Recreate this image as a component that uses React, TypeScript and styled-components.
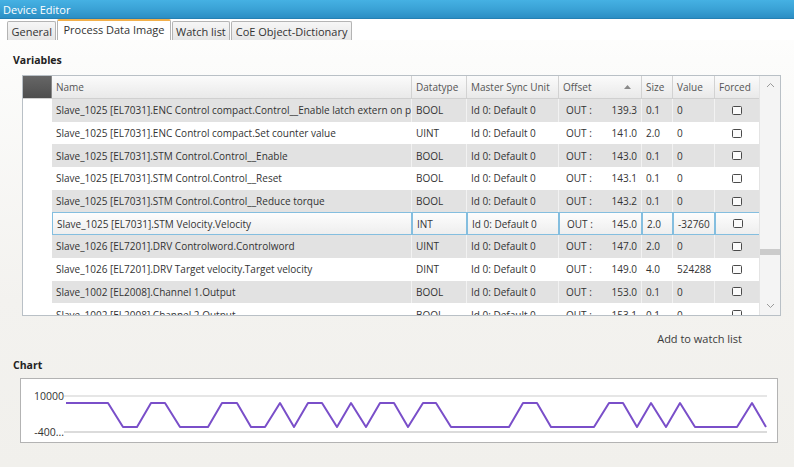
import React from "react";
import styled, { createGlobalStyle, css } from "styled-components";

const GlobalStyle = createGlobalStyle`
  html, body { margin: 0; padding: 0; }
  body { font-family: "Open Sans", "Noto Sans", sans-serif; color: #333; }
`;

const Window = styled.div`
  width: 794px;
  height: 467px;
  display: flex;
  flex-direction: column;
  overflow: hidden;
  background: linear-gradient(to bottom, #ffffff 0px, #fcfcfb 60px, #f3f2ef 300px, #f1f0ec 100%);
`;

const TitleBar = styled.div`
  height: 19px;
  flex: none;
  display: flex;
  align-items: center;
  padding-left: 3px;
  background: linear-gradient(to bottom, #45b1e3 0%, #3aa2d6 50%, #2b8ec4 100%);
  border-bottom: 1px solid #2580b3;
  box-sizing: border-box;
  color: #fff;
  font-size: 11px;
`;

const TabStrip = styled.div`
  height: 21px;
  flex: none;
  display: flex;
  align-items: flex-end;
  padding-left: 7px;
  background: #fff;
`;

const Tab = styled.div<{ $active?: boolean }>`
  box-sizing: border-box;
  height: 19px;
  padding: 0 3.5px;
  display: flex;
  align-items: center;
  font-size: 11px;
  color: #333;
  border: 1px solid #b4b4b4;
  border-bottom: none;
  border-radius: 2px 2px 0 0;
  margin-right: 1px;
  background: linear-gradient(to bottom, #f6f6f6, #e6e6e6);
  ${(p) =>
    p.$active &&
    css`
      height: 21px;
      padding: 0 5px 2px;
      background: #fff;
      border-top: 2px solid #f2b04c;
      border-color: #f2b04c #b4b4b4 #b4b4b4;
    `}
`;

const Content = styled.div`
  flex: 1;
  display: flex;
  flex-direction: column;
`;

const SectionLabel = styled.div<{ $top: number; $bottom: number }>`
  font-weight: 700;
  font-size: 10.5px;
  line-height: 14px;
  color: #222;
  padding-left: 13px;
  margin-top: ${(p) => p.$top}px;
  margin-bottom: ${(p) => p.$bottom}px;
`;

const TableFrame = styled.div`
  margin-left: 22px;
  width: 759px;
  height: 241px;
  box-sizing: border-box;
  border: 1px solid #b9c0c6;
  display: flex;
  background: #fff;
`;

const GridArea = styled.div`
  width: 737px;
  display: flex;
  flex-direction: column;
  overflow: hidden;
`;

const COLS = "29px 360px 55px 92px 83px 31px 42px 45px";

const HeaderRow = styled.div`
  display: grid;
  grid-template-columns: ${COLS};
  height: 23px;
  flex: none;
  background: linear-gradient(to bottom, #fbfbfb, #e9e9e9);
  border-bottom: 1px solid #d0d0d0;
  box-sizing: border-box;
`;

const Corner = styled.div`
  background: linear-gradient(to bottom, #666, #4e4e4e);
  border-right: 1px solid #888;
`;

const HeaderCell = styled.div<{ $last?: boolean }>`
  display: flex;
  align-items: center;
  justify-content: space-between;
  padding: 0 4px;
  font-size: 10px;
  color: #555;
  border-right: ${(p) => (p.$last ? "none" : "1px solid #d2d2d2")};
  white-space: nowrap;
  overflow: hidden;
`;

const SortMark = styled.svg`
  margin-right: 6px;
`;

const Body = styled.div`
  flex: 1;
  overflow: hidden;
`;

const Row = styled.div<{ $shade: boolean }>`
  display: grid;
  grid-template-columns: ${COLS};
  height: 22.7px;
  background: ${(p) => (p.$shade ? "#e2e2e2" : "#ffffff")};
`;

const RowHead = styled.div`
  background: #fff;
`;

const Cell = styled.div<{ $sel?: boolean; $center?: boolean; $split?: boolean }>`
  display: flex;
  align-items: center;
  padding: 0 4px 0 4px;
  font-size: 10px;
  color: #333;
  white-space: nowrap;
  overflow: hidden;
  box-sizing: border-box;
  border-right: 1px solid rgba(255, 255, 255, 0.55);
  ${(p) => p.$center && css`justify-content: center;`}
  ${(p) => p.$split && css`justify-content: space-between; padding-left: 7px;`}
  ${(p) =>
    p.$sel &&
    css`
      border: 1px solid #84bedf;
      background: linear-gradient(to bottom, #fdfdfd, #eeeeee);
    `}
`;

const Check = styled.span`
  width: 8px;
  height: 7px;
  border: 1.5px solid #4a4a4a;
  border-radius: 1.5px;
  background: #fbfbfb;
`;

const ScrollBar = styled.div`
  width: 20px;
  display: flex;
  flex-direction: column;
  align-items: center;
  background: #f4f4f4;
  border-left: 1px solid #e4e4e4;
`;

const ScrollTrack = styled.div`
  flex: 1;
  width: 100%;
  display: flex;
  flex-direction: column;
  justify-content: flex-end;
  padding-bottom: 42px;
`;

const Thumb = styled.div`
  height: 6px;
  background: #cbcbcb;
`;

const ArrowBox = styled.div`
  height: 18px;
  display: flex;
  align-items: center;
  justify-content: center;
`;

const ActionRow = styled.div`
  height: 42px;
  display: flex;
  justify-content: flex-end;
  padding-right: 52px;
  padding-top: 16px;
  box-sizing: border-box;
`;

const ActionLink = styled.span`
  font-size: 11px;
  line-height: 14px;
  color: #3a3a3a;
`;

const ChartBox = styled.div`
  margin-left: 20px;
  width: 758px;
  height: 65px;
  box-sizing: border-box;
  border: 1px solid #b3b3b3;
  background: #fff;
`;

const ChartSvg = styled.svg`
  display: block;
`;

type R = { name: string; type: string; off: string; size: string; val: string };

const rows: R[] = [
  { name: "Slave_1025 [EL7031].ENC Control compact.Control__Enable latch extern on positive edge", type: "BOOL", off: "139.3", size: "0.1", val: "0" },
  { name: "Slave_1025 [EL7031].ENC Control compact.Set counter value", type: "UINT", off: "141.0", size: "2.0", val: "0" },
  { name: "Slave_1025 [EL7031].STM Control.Control__Enable", type: "BOOL", off: "143.0", size: "0.1", val: "0" },
  { name: "Slave_1025 [EL7031].STM Control.Control__Reset", type: "BOOL", off: "143.1", size: "0.1", val: "0" },
  { name: "Slave_1025 [EL7031].STM Control.Control__Reduce torque", type: "BOOL", off: "143.2", size: "0.1", val: "0" },
  { name: "Slave_1025 [EL7031].STM Velocity.Velocity", type: "INT", off: "145.0", size: "2.0", val: "-32760" },
  { name: "Slave_1026 [EL7201].DRV Controlword.Controlword", type: "UINT", off: "147.0", size: "2.0", val: "0" },
  { name: "Slave_1026 [EL7201].DRV Target velocity.Target velocity", type: "DINT", off: "149.0", size: "4.0", val: "524288" },
  { name: "Slave_1002 [EL2008].Channel 1.Output", type: "BOOL", off: "153.0", size: "0.1", val: "0" },
  { name: "Slave_1002 [EL2008].Channel 2.Output", type: "BOOL", off: "153.1", size: "0.1", val: "0" },
];

const SEL = 5;

const H = 403;
const L = 427;
const wave: [number, number][] = [
  [66, H], [108, H], [123, L], [137, L], [151, H], [165, H], [180, L], [208, L], [222, H], [237, H],
  [251, L], [265, L], [280, H], [294, L], [308, H], [322, H], [337, L], [351, H], [366, L], [380, H],
  [394, H], [408, L], [423, H], [436, H], [451, L], [509, L], [523, H], [537, H], [551, L], [594, L],
  [609, H], [623, H], [637, L], [651, H], [666, L], [680, H], [695, L], [737, L], [752, H], [766, L],
];

export default function App() {
  return (
    <>
      <GlobalStyle />
      <Window>
        <TitleBar>Device Editor</TitleBar>
        <TabStrip>
          <Tab>General</Tab>
          <Tab $active>Process Data Image</Tab>
          <Tab>Watch list</Tab>
          <Tab>CoE Object-Dictionary</Tab>
        </TabStrip>
        <Content>
          <SectionLabel $top={13} $bottom={8}>Variables</SectionLabel>
          <TableFrame>
            <GridArea>
              <HeaderRow>
                <Corner />
                <HeaderCell>Name</HeaderCell>
                <HeaderCell>Datatype</HeaderCell>
                <HeaderCell>Master Sync Unit</HeaderCell>
                <HeaderCell>
                  Offset
                  <SortMark width="7" height="4" viewBox="0 0 7 4">
                    <polygon points="0,4 3.5,0 7,4" fill="#8a8a8a" />
                  </SortMark>
                </HeaderCell>
                <HeaderCell>Size</HeaderCell>
                <HeaderCell>Value</HeaderCell>
                <HeaderCell $last>Forced</HeaderCell>
              </HeaderRow>
              <Body>
                {rows.map((r, i) => {
                  const sel = i === SEL;
                  return (
                    <Row key={i} $shade={i % 2 === 0 && !sel}>
                      <RowHead />
                      <Cell $sel={sel}>{r.name}</Cell>
                      <Cell $sel={sel}>{r.type}</Cell>
                      <Cell $sel={sel}>Id 0: Default 0</Cell>
                      <Cell $sel={sel} $split>
                        <span>OUT :</span>
                        <span>{r.off}</span>
                      </Cell>
                      <Cell $sel={sel}>{r.size}</Cell>
                      <Cell $sel={sel}>{r.val}</Cell>
                      <Cell $sel={sel} $center>
                        <Check />
                      </Cell>
                    </Row>
                  );
                })}
              </Body>
            </GridArea>
            <ScrollBar>
              <ArrowBox>
                <svg width="9" height="6" viewBox="0 0 9 6">
                  <polyline points="1,5 4.5,1.5 8,5" fill="none" stroke="#9a9a9a" strokeWidth="1" />
                </svg>
              </ArrowBox>
              <ScrollTrack>
                <Thumb />
              </ScrollTrack>
              <ArrowBox>
                <svg width="9" height="6" viewBox="0 0 9 6">
                  <polyline points="1,1 4.5,4.5 8,1" fill="none" stroke="#9a9a9a" strokeWidth="1" />
                </svg>
              </ArrowBox>
            </ScrollBar>
          </TableFrame>
          <ActionRow>
            <ActionLink>Add to watch list</ActionLink>
          </ActionRow>
          <SectionLabel $top={0} $bottom={6}>Chart</SectionLabel>
          <ChartBox>
            <ChartSvg width="756" height="63" viewBox="21 379 756 63">
              <line x1="64" y1="396" x2="767" y2="396" stroke="#dedede" strokeWidth="1.5" />
              <line x1="64" y1="432" x2="767" y2="432" stroke="#cfcfcf" strokeWidth="1.5" />
              <text x="64" y="400" textAnchor="end" fontSize="10.5" fill="#333" fontFamily="Open Sans, sans-serif">10000</text>
              <text x="64" y="436" textAnchor="end" fontSize="10.5" fill="#333" fontFamily="Open Sans, sans-serif">-400...</text>
              <polyline
                points={wave.map(([x, y]) => `${x},${y}`).join(" ")}
                fill="none"
                stroke="#7a4fc9"
                strokeWidth="2"
                strokeLinejoin="round"
              />
            </ChartSvg>
          </ChartBox>
        </Content>
      </Window>
    </>
  );
}
